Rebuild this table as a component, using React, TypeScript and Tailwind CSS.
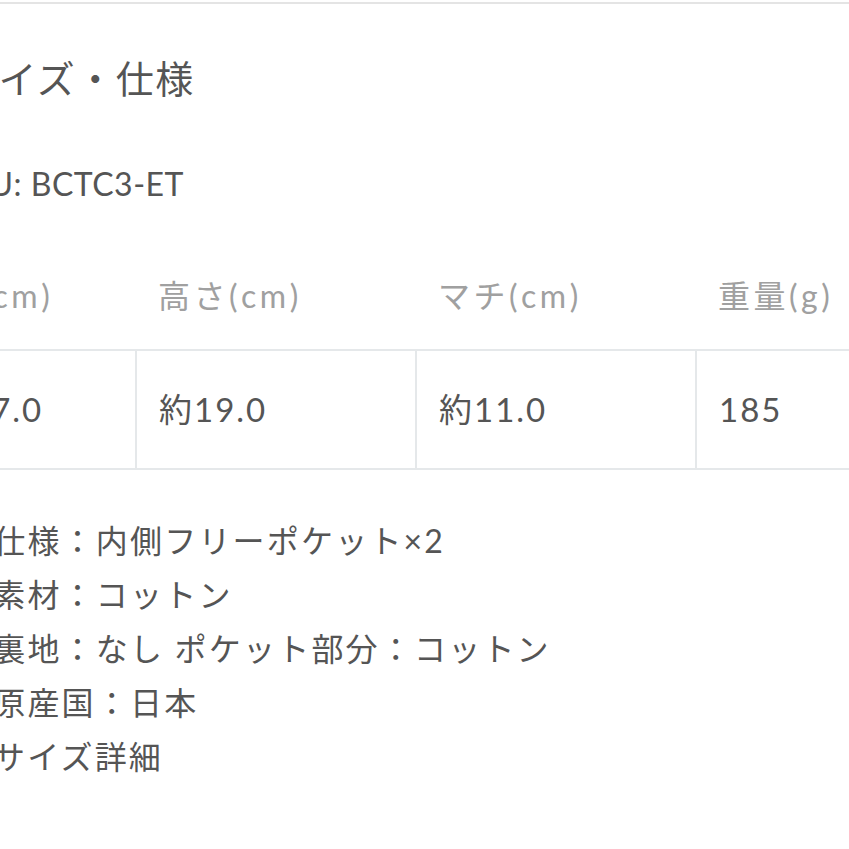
import React from "react";

const headers = ["幅(cm)", "高さ(cm)", "マチ(cm)", "重量(g)"];
const values = ["約27.0", "約19.0", "約11.0", "185"];
const specs = [
  "仕様：内側フリーポケット×2",
  "素材：コットン",
  "裏地：なし ポケット部分：コットン",
  "原産国：日本",
];

export default function App() {
  return (
    <div className="w-[849px] h-[849px] overflow-hidden bg-white whitespace-nowrap font-['Lato','Noto_Sans_CJK_JP',sans-serif] text-[#555]">
      <div className="h-[2px] mt-[2px] bg-[#e4e4e4]" />
      <h2 className="mt-[45px] ml-[-41px] text-[38px] leading-[58px] tracking-[1.5px] font-normal">
        サイズ・仕様
      </h2>
      <p className="mt-[52px] ml-[-50px] text-[32px] leading-[50px] tracking-[0.5px]">
        SKU: BCTC3-ET
      </p>
      <div className="mt-[34px] ml-[-145px] w-[1120px]">
        <div className="flex border-b-2 border-[#e5e8ea]">
          {headers.map((h, i) => (
            <div
              key={h}
              className={`w-[280px] h-[106px] flex items-center border-l-2 border-transparent text-[32px] tracking-[3.5px] text-[#a0a0a0] ${
                i === 0 ? "pl-[88px]" : "pl-[21px]"
              }`}
            >
              {h}
            </div>
          ))}
        </div>
        <div className="flex border-b-2 border-[#e5e8ea]">
          {values.map((v, i) => (
            <div
              key={v}
              className={`w-[280px] h-[117px] flex items-center text-[33px] tracking-[2px] ${
                i === 0 ? "pl-[78px] border-l-2 border-transparent" : "pl-[22px] border-l-2 border-[#e5e8ea]"
              }`}
            >
              {v}
            </div>
          ))}
        </div>
      </div>
      <ul className="mt-[44px] ml-[-41px] text-[32px] leading-[54px] tracking-[2.2px]">
        {specs.map((s) => (
          <li key={s}>・{s}</li>
        ))}
        <li className="pl-[34px]">サイズ詳細</li>
      </ul>
    </div>
  );
}
